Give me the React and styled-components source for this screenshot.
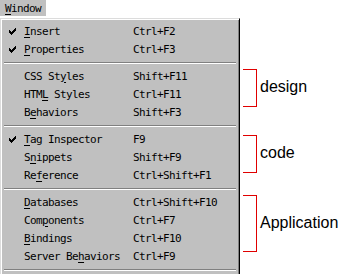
import React from 'react';
import styled, { createGlobalStyle } from 'styled-components';

const GlobalStyle = createGlobalStyle`
  html, body {
    margin: 0;
    padding: 0;
    background: #fff;
  }
  body {
    width: 340px;
    height: 275px;
    overflow: hidden;
  }
`;

const Page = styled.div`
  display: flex;
  flex-direction: column;
  font-family: "DejaVu Sans Mono", "Liberation Mono", monospace;
  font-size: 11px;
  letter-spacing: -0.62px;
  color: #000;
`;

const MenuBar = styled.div`
  height: 16px;
  margin-bottom: 2px;
  display: flex;
`;

const MenuTitle = styled.div`
  width: 46px;
  height: 16px;
  background: #c0c0c0;
  display: flex;
  align-items: center;
  padding-left: 5px;
  box-sizing: border-box;
`;

const Body = styled.div`
  display: flex;
  align-items: flex-start;
`;

const Panel = styled.div`
  width: 240px;
  box-sizing: border-box;
  background: #c0c0c0;
  border-top: 1px solid #dcdcdc;
  border-left: 1px solid #dcdcdc;
  border-right: 1px solid #000;
  box-shadow: inset 1px 1px #fff, inset -1px 0 #808080;
  padding: 3px 2px 0 2px;
  display: flex;
  flex-direction: column;
`;

const Row = styled.div`
  height: 18px;
  display: grid;
  grid-template-columns: 21px 109px 1fr;
  align-items: center;
  white-space: pre;
`;

const CheckCell = styled.div`
  display: flex;
  align-items: center;
  padding-left: 6px;
`;

const Key = styled.span`
  text-decoration: underline;
  text-underline-offset: 2px;
`;

const Separator = styled.div`
  height: 9px;
  display: flex;
  flex-direction: column;
  justify-content: center;
  padding: 0 1px;
  &::before {
    content: '';
    height: 1px;
    background: #808080;
  }
  &::after {
    content: '';
    height: 1px;
    background: #fff;
  }
`;

const Notes = styled.div`
  display: flex;
  flex-direction: column;
  padding-top: 51px;
  font-family: "Liberation Sans", Arial, sans-serif;
  font-size: 16px;
  letter-spacing: 0;
`;

const Note = styled.div`
  display: flex;
  align-items: center;
  margin-top: ${p => p.$gap}px;
`;

const Bracket = styled.div`
  width: 13px;
  height: ${p => p.$h}px;
  margin-left: 3px;
  border: 1.5px solid #e00000;
  border-left: none;
`;

const NoteText = styled.span`
  margin-left: 3px;
  padding-bottom: 2px;
`;

const Check = () => (
  <svg width="7" height="7" viewBox="0 0 7 7" shapeRendering="crispEdges">
    <path d="M0 2h1v1h1v1h1v-1h1v-1h1v-1h1v-1h1v3h-1v1h-1v1h-1v1h-1v1h-1v-1h-1v-1h-1z" fill="#000" />
  </svg>
);

const label = (text, idx) => (
  <span>
    {text.slice(0, idx)}
    <Key>{text[idx]}</Key>
    {text.slice(idx + 1)}
  </span>
);

const groups = [
  [
    { t: 'Insert', k: 0, s: 'Ctrl+F2', c: true },
    { t: 'Properties', k: 0, s: 'Ctrl+F3', c: true },
  ],
  [
    { t: 'CSS Styles', k: 6, s: 'Shift+F11' },
    { t: 'HTML Styles', k: 3, s: 'Ctrl+F11' },
    { t: 'Behaviors', k: 1, s: 'Shift+F3' },
  ],
  [
    { t: 'Tag Inspector', k: 0, s: 'F9', c: true },
    { t: 'Snippets', k: 1, s: 'Shift+F9' },
    { t: 'Reference', k: 2, s: 'Ctrl+Shift+F1' },
  ],
  [
    { t: 'Databases', k: 0, s: 'Ctrl+Shift+F10' },
    { t: 'Components', k: 3, s: 'Ctrl+F7' },
    { t: 'Bindings', k: 0, s: 'Ctrl+F10' },
    { t: 'Server Behaviors', k: 9, s: 'Ctrl+F9' },
  ],
];

const notes = [
  { text: 'design', h: 36, gap: 0 },
  { text: 'code', h: 36, gap: 28 },
  { text: 'Application', h: 55, gap: 22 },
];

export default function App() {
  return (
    <Page>
      <GlobalStyle />
      <MenuBar>
        <MenuTitle>{label('Window', 0)}</MenuTitle>
      </MenuBar>
      <Body>
        <Panel>
          {groups.map((g, gi) => (
            <React.Fragment key={gi}>
              {g.map(item => (
                <Row key={item.t}>
                  <CheckCell>{item.c && <Check />}</CheckCell>
                  {label(item.t, item.k)}
                  <span>{item.s}</span>
                </Row>
              ))}
              <Separator />
            </React.Fragment>
          ))}
        </Panel>
        <Notes>
          {notes.map(n => (
            <Note key={n.text} $gap={n.gap}>
              <Bracket $h={n.h} />
              <NoteText>{n.text}</NoteText>
            </Note>
          ))}
        </Notes>
      </Body>
    </Page>
  );
}
